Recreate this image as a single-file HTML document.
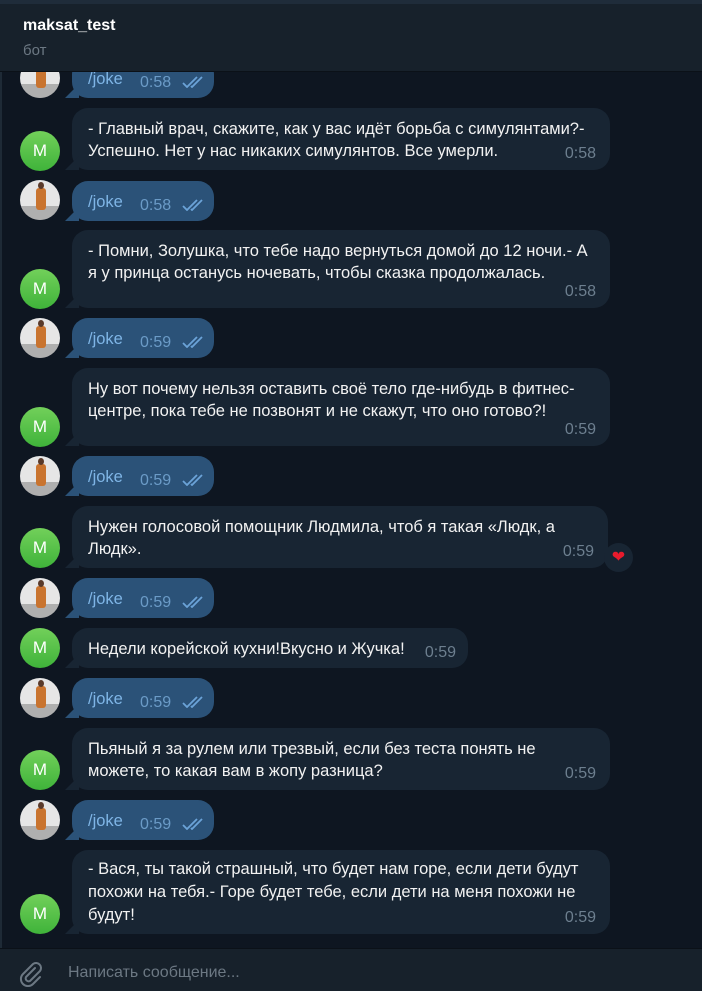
<!DOCTYPE html>
<html><head><meta charset="utf-8"><style>
*{margin:0;padding:0;box-sizing:border-box}
body{width:702px;height:991px;overflow:hidden;background:#0e1621;font-family:"Liberation Sans",sans-serif;position:relative;color:#f5f5f5}
.hdr{position:absolute;left:0;top:0;width:702px;height:72px;background:#17212b;border-top:4px solid #1f2c3a;border-bottom:1px solid #0b1118}
.hdr .t{position:absolute;left:23px;top:13px;font-weight:bold;font-size:16px;color:#fff}
.hdr .s{position:absolute;left:23px;top:38px;font-size:15px;color:#6c7883}
.b{position:absolute;left:72px;border-radius:16px;font-size:16.5px;line-height:22px;padding:10px 16px 0 16px;letter-spacing:0}
.in{background:#182533;width:538px;color:#f2f2f2}
.in .tm{position:absolute;right:14px;bottom:5px;font-size:16px;color:#6d7f8f}
.out{background:#2b5278;width:142px;height:40px;color:#7fb5e6}
.out .tm{position:absolute;left:68px;top:14px;font-size:16px;color:#6b9bc7}
.out svg{position:absolute;left:110px;top:18px}
.b:before{content:"";position:absolute;left:-7px;bottom:0;width:14px;height:14px;background:inherit;clip-path:polygon(100% 0,100% 100%,0 100%)}
.m{position:absolute;left:20px;width:40px;height:40px;border-radius:50%;background:linear-gradient(#72d05a,#3fb33a);color:#fff;font-size:17px;text-align:center;line-height:40px}
.p{position:absolute;left:20px;width:40px;height:40px;border-radius:50%;background:#e6e6e6;overflow:hidden}
.p i{position:absolute;left:16px;top:8px;width:10px;height:22px;background:#c9742f;border-radius:3px}
.p u{position:absolute;left:18px;top:2px;width:6px;height:7px;background:#5a3a2a;border-radius:50%}
.p s{position:absolute;left:0;top:26px;width:40px;height:14px;background:#777;opacity:.5}
.heart{position:absolute;left:604px;top:543px;width:29px;height:29px;border-radius:50%;background:#182533;color:#e81b2d;font-size:16px;text-align:center;line-height:29px}
.bar{position:absolute;left:0;top:948px;width:702px;height:43px;background:#17212b;border-top:1px solid #0b1118}
.bar span{position:absolute;left:68px;top:15px;font-size:16px;color:#6c7883}
.side{position:absolute;left:0;top:72px;width:2px;height:876px;background:#1e2a36}
</style></head><body>
<div class="side"></div>
<div class="p" style="top:58px"><s></s><i></i><u></u></div>
<div class="b out" style="top:58px"><span>/joke</span><span class="tm">0:58</span><svg width="24" height="12" viewBox="0 0 24 12"><path d="M1 7l4 4L15 1M9 10l1 1L20 1" stroke="#6ba3d8" stroke-width="1.8" fill="none"/></svg></div>
<div class="hdr"><div class="t">maksat_test</div><div class="s">бот</div></div>

<div class="m" style="top:131px">M</div>
<div class="b in" style="top:108px;height:62px">- Главный врач, скажите, как у вас идёт борьба с симулянтами?-<br>Успешно. Нет у нас никаких симулянтов. Все умерли.<span class="tm">0:58</span></div>

<div class="p" style="top:180px"><s></s><i></i><u></u></div>
<div class="b out" style="top:181px"><span>/joke</span><span class="tm">0:58</span><svg width="24" height="12" viewBox="0 0 24 12"><path d="M1 7l4 4L15 1M9 10l1 1L20 1" stroke="#6ba3d8" stroke-width="1.8" fill="none"/></svg></div>

<div class="m" style="top:269px">M</div>
<div class="b in" style="top:230px;height:78px">- Помни, Золушка, что тебе надо вернуться домой до 12 ночи.- А<br>я у принца останусь ночевать, чтобы сказка продолжалась.<span class="tm">0:58</span></div>

<div class="p" style="top:318px"><s></s><i></i><u></u></div>
<div class="b out" style="top:318px"><span>/joke</span><span class="tm">0:59</span><svg width="24" height="12" viewBox="0 0 24 12"><path d="M1 7l4 4L15 1M9 10l1 1L20 1" stroke="#6ba3d8" stroke-width="1.8" fill="none"/></svg></div>

<div class="m" style="top:407px">M</div>
<div class="b in" style="top:368px;height:78px">Ну вот почему нельзя оставить своё тело где-нибудь в фитнес-<br>центре, пока тебе не позвонят и не скажут, что оно готово?!<span class="tm">0:59</span></div>

<div class="p" style="top:456px"><s></s><i></i><u></u></div>
<div class="b out" style="top:456px"><span>/joke</span><span class="tm">0:59</span><svg width="24" height="12" viewBox="0 0 24 12"><path d="M1 7l4 4L15 1M9 10l1 1L20 1" stroke="#6ba3d8" stroke-width="1.8" fill="none"/></svg></div>

<div class="m" style="top:528px">M</div>
<div class="b in" style="top:506px;height:62px;width:536px">Нужен голосовой помощник Людмила, чтоб я такая «Людк, а<br>Людк».<span class="tm">0:59</span></div>
<div class="heart">❤</div>

<div class="p" style="top:578px"><s></s><i></i><u></u></div>
<div class="b out" style="top:578px"><span>/joke</span><span class="tm">0:59</span><svg width="24" height="12" viewBox="0 0 24 12"><path d="M1 7l4 4L15 1M9 10l1 1L20 1" stroke="#6ba3d8" stroke-width="1.8" fill="none"/></svg></div>

<div class="m" style="top:628px">M</div>
<div class="b in" style="top:628px;height:40px;width:396px">Недели корейской кухни!Вкусно и Жучка!<span class="tm" style="right:12px;bottom:4px">0:59</span></div>

<div class="p" style="top:678px"><s></s><i></i><u></u></div>
<div class="b out" style="top:678px"><span>/joke</span><span class="tm">0:59</span><svg width="24" height="12" viewBox="0 0 24 12"><path d="M1 7l4 4L15 1M9 10l1 1L20 1" stroke="#6ba3d8" stroke-width="1.8" fill="none"/></svg></div>

<div class="m" style="top:750px">M</div>
<div class="b in" style="top:728px;height:62px">Пьяный я за рулем или трезвый, если без теста понять не<br>можете, то какая вам в жопу разница?<span class="tm">0:59</span></div>

<div class="p" style="top:800px"><s></s><i></i><u></u></div>
<div class="b out" style="top:800px"><span>/joke</span><span class="tm">0:59</span><svg width="24" height="12" viewBox="0 0 24 12"><path d="M1 7l4 4L15 1M9 10l1 1L20 1" stroke="#6ba3d8" stroke-width="1.8" fill="none"/></svg></div>

<div class="m" style="top:894px">M</div>
<div class="b in" style="top:850px;height:84px;line-height:23px;padding-top:8px">- Вася, ты такой страшный, что будет нам горе, если дети будут<br>похожи на тебя.- Горе будет тебе, если дети на меня похожи не<br>будут!<span class="tm">0:59</span></div>

<div class="bar">
<svg style="position:absolute;left:18px;top:12px" width="26" height="26" viewBox="0 0 26 26"><path d="M17 7L8 16a3 3 0 0 0 4 4l10-10a5 5 0 0 0-7-7L5 13a7 7 0 0 0 10 10l7-7" stroke="#6c7883" stroke-width="2" fill="none" stroke-linecap="round"/></svg>
<span>Написать сообщение...</span></div>
</body></html>
